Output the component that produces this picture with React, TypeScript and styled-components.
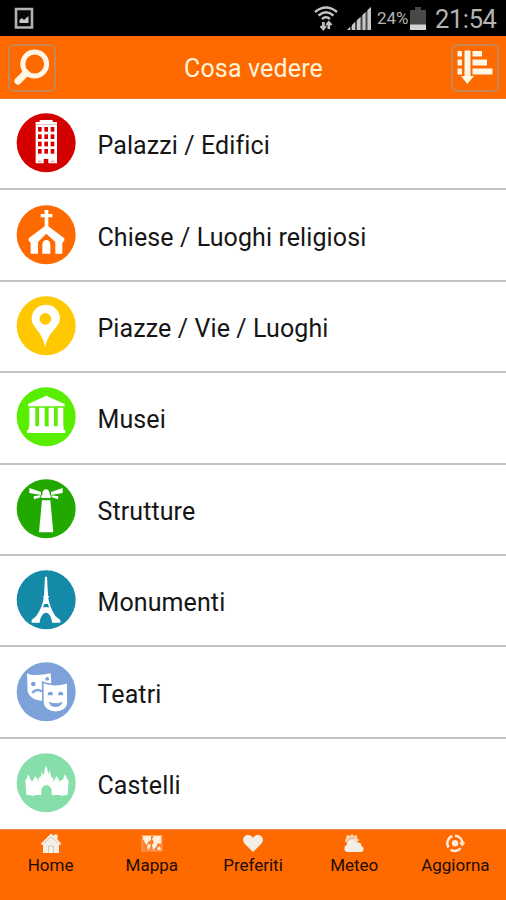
import React from "react";
import styled, { createGlobalStyle } from "styled-components";

const GlobalStyle = createGlobalStyle`
  *, *::before, *::after { box-sizing: border-box; }
  body { margin: 0; background: #fff; font-family: Roboto, "Liberation Sans", sans-serif; }
  svg { display: block; flex: none; }
`;

const Screen = styled.div`
  width: 506px;
  height: 900px;
  display: flex;
  flex-direction: column;
  overflow: hidden;
  background: #fff;
`;

const StatusBar = styled.div`
  height: 36px;
  flex: none;
  display: flex;
  align-items: center;
  justify-content: space-between;
  padding: 0 9px 0 14px;
  background: #000;
  color: #b4b4b4;
`;

const StatusGroup = styled.div`
  display: flex;
  align-items: center;
`;

const SignalGroup = styled.div`
  display: flex;
  align-items: center;
  gap: 8px;
  margin-right: 6px;
`;

const BatteryLevel = styled.span`
  width: 33px;
  font-size: 17px;
  line-height: 36px;
  letter-spacing: -0.1px;
  white-space: nowrap;
`;

const Clock = styled.span`
  width: 62px;
  margin-left: 9px;
  font-size: 25.5px;
  line-height: 36px;
  letter-spacing: -0.4px;
  padding-top: 2px;
  white-space: nowrap;
`;

const Header = styled.header`
  height: 63px;
  flex: none;
  display: flex;
  align-items: center;
  justify-content: space-between;
  padding: 0 7px 0 8px;
  background: #ff6a00;
  border-bottom: 1px solid #ee762a;
`;

const Title = styled.h1`
  margin: 0;
  padding-top: 4px;
  color: #fff3dc;
  font-size: 25px;
  font-weight: 400;
  line-height: 30px;
  letter-spacing: 0.15px;
`;

const HeaderButton = styled.button`
  width: 48px;
  height: 48px;
  padding: 0;
  margin-top: 1px;
  border: 2px solid #c98552;
  border-radius: 6px;
  background: transparent;
`;

const List = styled.ul`
  flex: 1;
  min-height: 0;
  margin: 0;
  padding: 0;
  list-style: none;
  display: grid;
  grid-template-rows: repeat(8, 91.4px);
`;

const Row = styled.li`
  display: flex;
  align-items: center;
  gap: 21.5px;
  padding: 0 16px 1px;
  border-bottom: 2px solid #c4c4c4;
  &:last-child { border-bottom-color: #fff; }
`;

const RowLabel = styled.span`
  padding-top: 6px;
  color: #161616;
  font-size: 25px;
  line-height: 32px;
  letter-spacing: 0.1px;
  white-space: nowrap;
`;

const TabBar = styled.nav`
  height: 71px;
  flex: none;
  display: grid;
  grid-template-columns: repeat(5, 1fr);
  background: #ff6a00;
  border-top: 1px solid #e58c50;
`;

const Tab = styled.a`
  display: flex;
  flex-direction: column;
  align-items: center;
  padding-top: 3px;
  color: #1c0d02;
  font-size: 17px;
  line-height: 22px;
`;

const ScreenshotIcon = () => (
  <svg width="20" height="23" viewBox="0 0 20 23">
    <path d="M2 2H18V20.5H2Z" fill="#080808" stroke="#b4b4b4" strokeWidth="2.6" />
    <path d="M5.5 16V13L8 11L10 13L14.5 9V16Z" fill="#c8c8c8" />
  </svg>
);

const WifiIcon = () => (
  <svg width="26" height="27" viewBox="0 0 26 27" fill="none" stroke="#c4c4c4">
    <path d="M2 7Q13-2 24 7M5.5 10.5Q13 4 20.5 10.5M9 14Q13 10.5 17 14" strokeWidth="2.4" />
    <path d="M10.4 17V23M15.8 24V18" strokeWidth="2.6" />
    <path d="M7.5 21L10.4 24.4L13 21M13.3 20L15.8 17L18.6 20" strokeWidth="2" />
  </svg>
);

const SignalIcon = () => (
  <svg width="24" height="24" viewBox="0 0 24 24">
    <path d="M0 24L24 1V24Z" fill="#4b4b4b" />
    <path d="M0 24L3 21V24ZM5 19L8 16V24H5ZM10 14L13.5 11V24H10ZM15.5 9L18.5 6V24H15.5ZM20.5 4L24 1V24H20.5Z" fill="#c8c8c8" />
  </svg>
);

const BatteryIcon = () => (
  <svg width="16" height="23" viewBox="0 0 16 23">
    <path d="M5 0H11V3H16V23H0V3H5Z" fill="#484848" />
    <path d="M0 17.5H16V23H0Z" fill="#d4d4d4" />
  </svg>
);

const SearchIcon = () => (
  <svg width="44" height="44" viewBox="0 0 44 44" fill="none" stroke="#fff8e6">
    <circle cx="24.7" cy="18" r="11.9" strokeWidth="5" />
    <path d="M16 27L8 35" strokeWidth="7" strokeLinecap="round" />
  </svg>
);

const SortIcon = () => (
  <svg width="44" height="44" viewBox="0 0 44 44" fill="#fff8e6">
    <path d="M11.5 4.5H17.5V30H21L14.3 38L8 30H11.5Z" />
    <path d="M4.5 5H9V10.5H4.5ZM4.5 13.5H9V19.5H4.5ZM4.5 22.5H9V28.5H4.5Z" />
    <path d="M19.5 5H29V10.5H19.5ZM19.5 13.5H34V19.5H19.5ZM19.5 22.5H39.5V28.5H19.5Z" />
  </svg>
);

type DiscProps = { color: string; children: React.ReactNode };

const Disc = ({ color, children }: DiscProps) => (
  <svg width="60" height="60" viewBox="0 0 180 180" fill="#fff">
    <circle cx="90.5" cy="89.5" r="88.5" fill={color} />
    {children}
  </svg>
);

const windowRows = [42, 64, 86, 108];
const windowColumns = [66, 85, 104];

const Palace = () => (
  <>
    <path d="M71 21H110V27H123V151H97V138H83V151H59V27H71Z" />
    <g fill="#d40000">
      {windowRows.map((y) =>
        windowColumns.map((x) => <rect key={`${x}-${y}`} x={x} y={y} width="11" height="14" />)
      )}
      <path d="M59 33H123V34.5H59ZM66 143H76V146H66ZM104 143H115V146H104Z" opacity=".5" />
    </g>
  </>
);

const Church = () => (
  <>
    <path d="M86 15H97V27H109V37H97V64L145 100V107L139 113V146H118V111L91 86L66 111V146H44V113L38 107V100L86 64V37H74V27H86Z" />
    <path d="M79 146V117Q81 105 91 105Q101 105 103 117V146Z" />
  </>
);

const Pin = () => (
  <path
    fillRule="evenodd"
    d="M90 26C66 26 47 44 47 68C47 95 80 105 88 155C95 105 132 95 132 68C132 44 113 26 90 26ZM88 51A17.5 17.5 0 1 1 88 86A17.5 17.5 0 1 1 88 51Z"
  />
);

const Museum = () => (
  <>
    <path d="M91 26L146 51V58H36V51Z" />
    <path d="M40 62H58V120H40ZM69 62H86V120H69ZM98 62H114V120H98ZM125 62H142V120H125Z" />
    <path d="M38 118H143V129H148V138H33V129H38Z" />
  </>
);

const Lighthouse = () => (
  <>
    <path d="M78 64H103L112 160H69Z" />
    <path d="M79 49V42Q81 32 90 31Q99 32 101 42V49H104V57H76V49Z" />
    <path d="M40 27L75 39V48L40 42ZM140 27L105 39V48L140 42ZM53 52L73 49V55L54 61ZM127 52L107 49V55L126 61Z" />
  </>
);

const Tower = () => (
  <>
    <path d="M87 20H93L96 76Q98 107 118 138L133 150V158H108L107 150Q102 129 90 128Q78 129 72 150L71 158H47V150L61 138Q82 107 84 76Z" />
    <path d="M85 102H96L99 112H81Z" fill="#148aa8" />
    <path d="M81 78H99V82H81ZM75 113H105V119H75Z" />
  </>
);

const Masks = () => (
  <>
    <path d="M33 34Q43 40 54 39Q78 40 104 34L107 87Q101 114 75 116Q42 112 35 89Z" />
    <circle cx="52" cy="66" r="7" fill="#7da2da" />
    <path d="M49 93Q60 78 78 88" fill="none" stroke="#7da2da" strokeWidth="7" />
    <path d="M80 61Q98 68 117 68Q139 68 155 60L156 126Q150 150 119 151Q87 148 81 126Z" stroke="#7da2da" strokeWidth="5" />
    <path d="M95 100Q95 89 103 89Q111 89 111 100ZM126 100Q126 89 134 89Q142 89 142 100ZM98 119Q119 128 140 119Q134 135 119 135Q103 135 98 119Z" fill="#7da2da" />
    <path d="M93 45Q100 45 99 54Q89 59 87 50Z" fill="#7da2da" />
  </>
);

const Castle = () => (
  <>
    <path d="M28 81H46V85H68V75L75 70L77 54L80 66L84 62L86 48L90 38L94 48L97 64L101 52L106 72L112 76V85H134V81H158L155 125L134 129V126H107V111Q103 97 91 96Q79 97 76 111V126H57V129L31 125Z" />
    <path d="M30 81L37 64L44 81ZM49 85L59 69L68 85ZM113 85L122 69L131 85ZM140 81L147 63L155 81Z" />
  </>
);

const HomeIcon = () => (
  <svg width="22" height="21" viewBox="0 0 22 21">
    <path d="M11 .5L14 3V1.5H17.5V6.5L21.5 11L19 12V20H3V12L.5 11Z" fill="#f4eee5" />
    <path d="M8.5 20V13H13.5V20M4 10L11 4L18 10" fill="none" stroke="#d5c8b9" />
  </svg>
);

const MapIcon = () => (
  <svg width="22" height="21" viewBox="0 0 22 21">
    <path d="M1 2.5H21V18H1Z" fill="#fa8130" stroke="#ffad76" strokeWidth=".8" />
    <path d="M2 3H10V7L7 9L6 12L4 10L2 6ZM7 11L10 12L8 17L6 15ZM11 6L13 3H20V11L17 10L15 14L12 17L11 12L13 9ZM16 15L19 13L20 17H17Z" fill="#fff0df" />
  </svg>
);

const HeartIcon = () => (
  <svg width="22" height="21" viewBox="0 0 22 21">
    <path d="M11 19L2.5 10.5C-.7 6.6 2 2 6 2C8.5 2 10 3.3 11 5C12 3.3 13.5 2 16 2C20 2 22.7 6.6 19.5 10.5Z" fill="#f3eee6" />
  </svg>
);

const WeatherIcon = () => (
  <svg width="22" height="21" viewBox="0 0 22 21">
    <path d="M3 5L4 2L7 3L9 1L11 3L14 2V5L16 7L14 10H4L2 8Z" fill="#f5d7b8" />
    <path d="M4 19C0 18 1 12 4 12C3 6 12 5 14 10C18 9 19 12 18 13C22 14 21 19 18 19Z" fill="#f3eee6" />
    <path d="M4 9Q6 4 12 5" fill="none" stroke="#e8a874" />
  </svg>
);

const RefreshIcon = () => (
  <svg width="22" height="21" viewBox="0 0 22 21" fill="none" stroke="#ffebd7">
    <path d="M4.6 14.5A7.5 7.5 0 0 1 8.4 3.2M11 2.8A7.5 7.5 0 0 1 18.4 11M16.6 15A7.5 7.5 0 0 1 6.5 16.8" strokeWidth="2.4" />
    <path d="M15 9.5H21.5L18.3 13.5Z" fill="#ffebd7" stroke="none" />
    <circle cx="11" cy="10.3" r="3.2" fill="#ffebd7" stroke="none" />
  </svg>
);

const categories = [
  { label: "Palazzi / Edifici", color: "#d40000", Icon: Palace },
  { label: "Chiese / Luoghi religiosi", color: "#ff6a00", Icon: Church },
  { label: "Piazze / Vie / Luoghi", color: "#ffc800", Icon: Pin },
  { label: "Musei", color: "#59ed00", Icon: Museum },
  { label: "Strutture", color: "#22a900", Icon: Lighthouse },
  { label: "Monumenti", color: "#148aa8", Icon: Tower },
  { label: "Teatri", color: "#7da2da", Icon: Masks },
  { label: "Castelli", color: "#86dfaa", Icon: Castle },
];

const tabs = [
  { label: "Home", Icon: HomeIcon },
  { label: "Mappa", Icon: MapIcon },
  { label: "Preferiti", Icon: HeartIcon },
  { label: "Meteo", Icon: WeatherIcon },
  { label: "Aggiorna", Icon: RefreshIcon },
];

export default function App() {
  return (
    <Screen>
      <GlobalStyle />
      <StatusBar>
        <ScreenshotIcon />
        <StatusGroup>
          <SignalGroup>
            <WifiIcon />
            <SignalIcon />
          </SignalGroup>
          <BatteryLevel>24%</BatteryLevel>
          <BatteryIcon />
          <Clock>21:54</Clock>
        </StatusGroup>
      </StatusBar>
      <Header>
        <HeaderButton aria-label="Cerca"><SearchIcon /></HeaderButton>
        <Title>Cosa vedere</Title>
        <HeaderButton aria-label="Ordina"><SortIcon /></HeaderButton>
      </Header>
      <List>
        {categories.map(({ label, color, Icon }) => (
          <Row key={label}>
            <Disc color={color}><Icon /></Disc>
            <RowLabel>{label}</RowLabel>
          </Row>
        ))}
      </List>
      <TabBar>
        {tabs.map(({ label, Icon }) => (
          <Tab key={label}>
            <Icon />
            <span>{label}</span>
          </Tab>
        ))}
      </TabBar>
    </Screen>
  );
}
